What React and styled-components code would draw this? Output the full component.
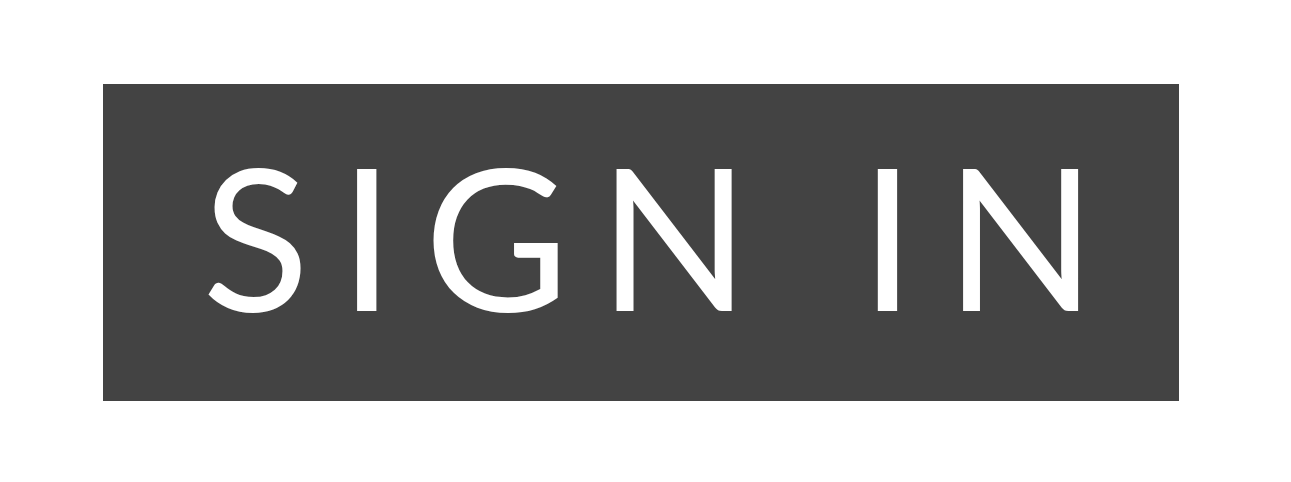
import styled, { createGlobalStyle } from "styled-components";

const GlobalStyle = createGlobalStyle`
  body {
    margin: 0;
    background: #ffffff;
    font-family: "Lato", "Liberation Sans", sans-serif;
  }
`;

export default function App() {
  return (
    <>
      <GlobalStyle />
      <Page>
        <SignInButton type="button">
          <Label>SIGN IN</Label>
        </SignInButton>
      </Page>
    </>
  );
}

const Page = styled.main`
  padding: 84px 0 0 103px;
`;

const SignInButton = styled.button`
  display: flex;
  align-items: center;
  justify-content: center;
  width: 1076px;
  height: 317px;
  padding: 0 0 16px 16px;
  border: none;
  background-color: #434343;
  color: #ffffff;
  cursor: pointer;
`;

const Label = styled.span`
  font-family: "Lato", "Liberation Sans", sans-serif;
  font-weight: 400;
  font-size: 198px;
  line-height: 1;
  letter-spacing: 0.15em;
  margin-right: -0.15em;
`;
